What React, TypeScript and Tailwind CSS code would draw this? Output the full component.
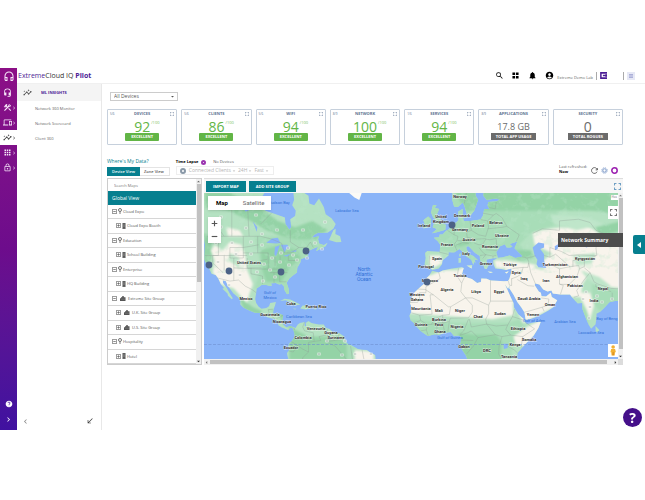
import type { ReactNode } from 'react';
import {
  MdAccountCircle,
  MdApps,
  MdArrowDropDown,
  MdCallReceived,
  MdChevronLeft,
  MdChevronRight,
  MdConstruction,
  MdHeadsetMic,
  MdHelp,
  MdInsights,
  MdNotifications,
  MdOutlineDevices,
  MdOutlineHeadset,
  MdOutlineLock,
  MdSearch,
} from 'react-icons/md';

type Point = [number, number];

const scores = [
  { title: 'DEVICES', ratio: '5/6', value: '92' },
  { title: 'CLIENTS', ratio: '5/6', value: '86' },
  { title: 'WIFI', ratio: '5/6', value: '94' },
  { title: 'NETWORK', ratio: '8/9', value: '100' },
  { title: 'SERVICES', ratio: '1/6', value: '94' },
  { title: 'APPLICATIONS', ratio: '8/9', value: '17.8 GB', total: 'TOTAL APP USAGE' },
  { title: 'SECURITY', ratio: '', value: '0', total: 'TOTAL ROGUES' },
];

const sites = [
  { name: 'Cloud Expo', kind: 'pin' },
  { name: 'Cloud Expo Booth', kind: 'building' },
  { name: 'Education', kind: 'pin' },
  { name: 'School Building', kind: 'building' },
  { name: 'Enterprise', kind: 'pin' },
  { name: 'HQ Building', kind: 'building' },
  { name: 'Extreme Site Group', kind: 'group' },
  { name: 'U.K. Site Group', kind: 'subgroup' },
  { name: 'U.S. Site Group', kind: 'subgroup' },
  { name: 'Hospitality', kind: 'pin' },
  { name: 'Hotel', kind: 'building' },
];

// Coast lines as "lon,lat" pairs
const land = [
  '-135,66 -128,51 -124.5,48.4 -124,46 -124.2,43 -124.3,40.3 -122.5,37.5 -121.8,36.6 -120.6,34.5 -118.5,34 -117.2,32.7 -116.6,31.5 -115.8,30 -114.1,28.2 -115,27.8 -113.5,26.7 -112.2,25.5 -112,24.5 -110,22.9 -109.5,23.4 -111,25.5 -112.5,28 -114.6,30.5 -114.7,31.7 -113.1,31.2 -112,29 -110.5,27.2 -109.3,25.7 -107,23.9 -105.5,22.3 -105.6,20.4 -104,18.9 -101.5,17.6 -98,16.2 -95.2,16.1 -93.5,15.5 -91.5,14 -89,13.3 -87.5,13 -86,11.4 -85.7,9.9 -83.7,8.6 -82.5,8.2 -80.5,7.3 -80,8.2 -78.5,8.7 -77.8,7.3 -77.3,5.5 -77.2,3.9 -78.8,1.5 -80,0.5 -80.8,-1.5 -80,-3 -81.2,-4.5 -81,-6 -79,-12 -35,-12 -34.9,-8 -35.2,-5.5 -37.5,-4.6 -39.5,-3 -42,-2.8 -44.3,-2.5 -47.5,-0.7 -50,0.5 -50.5,2 -51.5,4.2 -54,5.9 -57,6 -59,8 -61,8.6 -62,10.2 -64.5,10.2 -66,10.6 -68.5,11 -70,12.1 -71.5,11 -71.2,9.4 -72,9.6 -71.9,11.5 -74.5,11.1 -75.6,10.3 -76.8,8.5 -79.5,9.5 -81.5,8.9 -83.2,10.2 -83.7,12.5 -83.2,15 -85.5,15.9 -88.5,15.8 -88.2,18 -87.4,20 -87,21.5 -90,21.1 -90.6,19.5 -92,18.6 -94.5,18.2 -96,19.2 -97.3,21 -97.8,23 -97.3,26 -97,28 -94.5,29.5 -92,29.6 -90.5,29.2 -89.2,29.1 -89.5,30.3 -87,30.4 -85.3,29.8 -84,30 -82.8,28.8 -82.5,27.2 -81.2,25.3 -80.2,25.6 -80.4,27.8 -81.4,30.6 -80,32.5 -78,33.9 -76,35 -75.9,37 -74.2,39.3 -74,40.5 -71,41.5 -70,42 -70.8,43 -69,44.1 -67,44.7 -65,45.3 -66,43.7 -64,44.5 -61,45.5 -60,46.7 -62,45.9 -64.5,46.5 -65,48 -64.5,49 -68,48.5 -70,47 -67,49.5 -65,50.2 -60,50.2 -57,51.5 -55.8,53 -58,54.8 -61,56 -62,58 -64.5,60.3 -67,58.5 -69.5,59 -70,61 -74,62.3 -78,62.4 -77.5,60 -78.5,58.5 -76.6,57 -77,55.5 -79.5,54.5 -79,52 -80,51.2 -82,53 -82.3,55 -87,56 -92.5,57 -94.5,59 -94.7,60.5 -91,63 -90,66',
  '5,70 5,62 5,60 6,58.2 8,58 10.5,59.3 11.3,58.5 12.8,55.8 14.2,55.4 16.5,57 18.5,60 17.2,61 17.3,63 21.5,63 21.3,61 23,60 28,60.3 30,60 28,59.5 24,59.4 23.5,58.5 24.4,57.5 21.7,57.4 21,55.5 19.8,54.4 14.5,54 11,54 10.5,55.5 10.5,57.5 8.2,56.8 8.3,54.2 7,53.4 4.7,53 3.5,51.4 1.7,50.8 0,49.6 -1.5,49.6 -1.8,48.7 -4.6,48.5 -2.5,47.3 -1.2,46 -1.5,43.4 -8,43.7 -9.2,43 -8.8,41 -9.4,38.7 -8.9,37 -6.5,36.9 -5.5,36.1 -2,36.8 -0.3,38.5 0,40 3.1,42 3.2,43.2 6,43.1 8.8,44.4 10.4,43.5 12.3,41.7 15,40.3 16,38.2 16.5,39.5 17.1,39 16.8,40.4 18.5,40.1 16,41.8 14,42.5 12.4,44.5 12.4,45.4 13.7,45.5 15,44.5 17,43 19.4,41.8 19.5,40.2 21.2,38.3 21.8,36.8 23,36.5 24,38 23,39.5 23,40.4 26,40.8 28.9,41 28,43.2 30,45.5 32.5,46.2 33.5,45 35.3,45 36.5,45.3 35,46.3 39,47.2 38,45.5 37.5,44.7 41.5,42 41.5,41.5 38,41 35,42 31.5,41.3 29,41.1 26.3,40 26.5,38.4 27.5,36.8 30.5,36.5 33,36.1 36,36.8 35.8,35 34.9,32.5 34.2,31.3 32,31.2 30,31.4 25,31.6 23,32.3 20.2,32.5 20,30.9 18,30.4 15.3,32.2 11,33.3 10.2,34.5 11,36.9 9.8,37.3 5,36.8 0,35.9 -2,35.1 -5.5,35.8 -6.8,34 -9.6,31.5 -9.8,30 -12.5,28 -14.8,26 -16,23.8 -17,21 -16.2,19 -16.4,16.5 -17.4,14.7 -16.7,12.5 -15,11 -13.3,9 -11.5,6.9 -7.7,4.4 -4,5.2 -2,4.8 1.2,6 4.3,6.4 6,4.3 8.5,4.6 9.7,3.8 9.5,1 8.8,-0.7 11,-4 12.3,-6 13.3,-9 13,-12 40.5,-12 39.5,-9 39,-6.5 39.2,-4.6 41.5,-1.8 44,1 47.5,4.5 50,8.5 51.3,11.8 47,11.2 44,10.5 43,11.7 42.5,13 39.5,15.5 37.3,18.8 37,21 35.5,24 33.5,28 32.5,29.9 34.2,27.8 35,29.5 34.8,28.1 37,25 39,21.5 41,19 42.7,16.5 43.3,12.8 45,12.8 48.5,14 52,15.6 55,17.2 57.8,19 59.8,22.4 57,24 56.4,26 54,24.2 51.6,24.3 51.3,26 50.2,26.5 48,29.5 48.5,30.2 50.5,29.8 52.5,27.5 54.8,26.6 56.8,27 57.5,25.6 61.5,25.1 66.5,25.2 67.5,23.8 69,22.3 70.5,20.8 72.8,21 73,18 74.8,13.5 76.3,10 77.5,8.1 79.8,10.3 80.3,13.5 80.3,15.7 82.3,16.7 85,19.3 87,21.4 90,22 95,22 95,70',
  '-59.3,47.7 -57,51 -55.8,51.5 -56,49.8 -53.5,49 -52.8,47 -55.5,46.9',
  '-84.8,22 -82.5,23.1 -79.5,22.8 -75,20.7 -74.3,20.2 -77.5,19.9 -78.5,21.2 -82,22.4',
  '-74.3,18.4 -73,19.9 -70,19.8 -68.5,18.6 -71.5,17.8',
  '-78.3,18.3 -76.3,18.2 -77,17.8',
  '-67.2,18.5 -65.6,18.4 -66,17.9 -67.2,18',
  '-5.5,50 -3.5,50.3 1.4,51.2 1.6,52.8 0,53.2 -1.5,55 -3,56 -1.8,57.5 -4,57.8 -3.2,58.6 -5,58.6 -6,56.5 -4.9,55 -3,54 -4.5,53.2 -5.2,52 -3,51.4',
  '-10,51.6 -6.3,52.2 -6,54.5 -7.5,55.3 -10,54.2 -9.3,53',
  '12.5,38 15.5,38.2 15.1,36.8',
  '8.3,39 9.6,39.2 9.6,41 8.3,41',
  '8.7,41.6 9.4,41.6 9.4,43 8.7,42.5',
  '23.5,35.5 26.3,35.3 25,34.9',
  '32.4,35 34.5,35.6 33.5,34.6',
  '79.8,9.5 81.8,7.5 81,6.1 79.9,6.8',
  '11,55.2 12.5,56 12.3,55 11.2,54.8',
];

const greenland = '-54,66 -52,64.5 -49,61.8 -46,60.6 -43.5,59.9 -42,62 -40,66';

const water = [
  '47,45 50,46.8 53,46.5 53,45 51,44.5 53,42.5 53,40 54,37 50,37.3 49,38.5 49.5,40.3 48,42',
  '58.5,45.5 60.5,46.3 60,44.5 58.7,44',
  '74,45.5 78,46.5 79,46 75,45',
  '31.8,0.3 34,0.3 34,-2 32,-2.5',
  '-92,46.7 -89,48.2 -86,48.5 -84.6,46.6 -87,46.5',
  '-87.8,42.5 -87,41.7 -86.3,43 -85,45.8 -87.5,45.2',
  '-84.5,46 -82.5,43.1 -81.5,44.5 -80,44.7 -81,46',
  '-83.3,41.8 -79,42.8 -81,41.6',
  '-79.6,43.5 -76.3,44.1 -76.5,43.4',
  '-99,53.8 -97,50.5 -96.7,52',
  '-104,58 -101,57 -103,56.8',
];

const biomes = [
  {
    fill: '#a8ddb8',
    shapes: [
      '-12,60 20,61 40,58 60,57 60,53 46,50 40,46 48,41 40,40 26,42 18,38 8,43 -2,44 -12,50',
      '-98,49 -66,49 -60,44 -80,24 -98,28 -95,38',
      '-18,13 -8,12 8,11 22,11 34,11 40,13 43,9 40,3 36,-3 36,-10 8,-10 8,3 -8,3 -18,9',
      '72,21 76,18 76,8 70,10',
      '78,30 92,27 94,21 86,19 82,17 78,22',
      '-50,1 -43,-3 -43,-9 -52,-9',
    ],
  },
  {
    fill: '#94d3a6',
    shapes: [
      '-124,58 -112,57 -100,54 -92,51 -84,49 -76,48 -66,48 -60,51 -68,54 -77,52 -86,54 -98,59 -112,62 -124,62',
      '-95,44 -84,46 -76,44 -74,41 -80,37 -84,31 -92,31 -94,36',
      '-125,50 -121,49 -120,42 -123,38 -126,40',
      '5,63 14,64 40,66 62,64 80,64 92,62 92,56 78,57 60,57 40,57 25,57 12,57',
      '34,44 46,44 48,41 40,40',
      '6,46 15,48 15,46.5 7,45',
      '8,6 16,5 28,5 31,1 30,-10 10,-10 9,0',
      '-80,9 -70,4 -62,4 -54,4 -50,0 -50,-8 -80,-8',
      '82,49 94,51 94,54 80,52',
      '-92,18 -86,16 -83,10 -78,8 -78,10 -84,17',
      '-106,24 -99,19 -94,17 -96,15 -104,18',
    ],
  },
  {
    fill: '#f8f4ec',
    shapes: [
      '-119,46 -115,44 -111,47 -105,46 -103,42 -102,36 -99,30 -101,25 -102,21 -106,25 -109,28 -116,30 -120,35 -119,40 -121,44',
      '-113,52 -106,51 -104,49 -112,49',
      '-18,32 -6,34 0,36 8,36 12,38 36,34 37,15 26,13 12,14 -4,15 -18,16',
      '33,38 44,39 50,38 57,43 48,46 47,50 52,51 62,52 74,53 84,49 95,48 95,28 84,29 76,34 73,30 72,24 62,24 60,20 42,11 32,31',
      '27,40 34,40 42,39 40,36 28,37',
      '-7,42 -1,42 0,39 -5,37 -7,38',
      '37,4 44,9 52,13 52,8 43,-1 38,0',
      '71,26 77,26 79,20 77,13 75,18',
      '-46,-3 -36,-4 -36,-9 -46,-9',
    ],
  },
  {
    fill: '#bfe6ca',
    shapes: [
      '68,42 80,43 78,39 70,38',
      '48,38 54,37 52,36 48,37',
      '56,56 76,55 84,53 70,51 58,53',
      '72,36 82,33 88,29 84,28 76,32',
      '-111,43 -106,41 -106,36 -108,38 -112,40',
    ],
  },
];

const borders = [
  '-123,49 -95,49 -89,48 -84,46.5 -82.5,43 -79,43 -75,45 -71,45 -69,47 -67.5,45',
  '-117,32.6 -111,31.3 -106.5,31.8 -103,29 -99.5,27.5 -97.3,26',
  '-120,60 -94,60',
  '-120,54 -114,49',
  '-110,60 -110,49',
  '-102,60 -101,49',
  '-95,53 -89,56.5',
  '-79.5,51 -79.5,47 -75,45',
  '-117,49 -117,42 -120,42 -120,39 -114.6,35',
  '-124,42 -102,42',
  '-114,42 -114,36',
  '-111,45 -104,45 -104,41 -111,41 -111,45',
  '-109,41 -109,31.5',
  '-104,49 -104,45 -96,46',
  '-102,41 -102,37 -94.5,37',
  '-109,37 -94.5,36.5 -82,36.5',
  '-100,37 -100,34.5 -94,33.5 -94,30',
  '-96.5,49 -96.5,43 -91,43 -91,36',
  '-104,43 -96.5,43',
  '-95,40 -91.5,40.5',
  '-90,35 -85,35 -81,35',
  '-88,35 -88,30.5',
  '-85,35 -85,31 -81.5,31',
  '-87.5,41.5 -87.5,38',
  '-84.8,41.7 -84.8,39',
  '-80.5,42 -80.5,40 -75,40',
  '-92,14.5 -90.5,16 -91,17.8 -88.5,18',
  '-89,15.9 -89,14.3 -87.5,13.2',
  '-83.3,15 -87,13',
  '-83.7,11 -85.7,11.1',
  '-77.5,8.5 -77.3,7.5',
  '-72,11.5 -73,9 -72,7 -67.5,6 -67,1.5 -70,1 -70,-4 -73,-2.5 -77.5,0.5 -79,1.4',
  '-67,1.5 -63.5,2 -64.5,4 -61,4.8 -60,8',
  '-60,5 -59.8,1.5 -56.5,2 -57.5,5.8',
  '-56.5,2 -54.5,2.3 -54,5.8',
  '-54.5,2.3 -52,2.5 -51.5,4.2',
  '-75.3,-0.1 -78,-4 -80.3,-3.5',
  '-70,-4 -73,-7 -73,-10',
  '-60,1 -56,-1 -50,-8',
  '-48,-1 -47,-8',
  '-42,-3 -41,-8',
  '-6.9,41.9 -7,38 -7.4,37.2',
  '-1.8,43.3 3.1,42.4',
  '2.5,51 6,49.5 8,49 7.5,47.5 6,46.2 7.5,43.8',
  '7,53.3 6,51 6,49.5',
  '8,47.5 13,47.5 12.5,50.3 15,51 14.3,54',
  '7,45.9 10.5,46.8 13.7,46.5',
  '15,51 18.8,49.5 22.5,49 24,52 23.5,54 19.8,54.4',
  '13,48.6 17,48 22.5,48.2',
  '16.5,46.6 19,46 21,46.2 22.5,48 24.8,47.8 28,48.2 28.2,45.5 29.6,45.3',
  '23.5,51.5 31.5,52 33.5,52.3 40,49.5 38.5,47.2',
  '23.5,54 26.5,55.7 28,56.2 31,55 33.5,52.3',
  '21,56.3 26.5,55.7',
  '24.4,57.9 27.5,57.5 28,59.4',
  '22.7,44.2 28.5,43.8',
  '19.5,42 22.5,42.3 26.3,41.8 28,42',
  '19,45 20.5,43.5 22.5,42.3 21,40.8',
  '26.3,41.8 26.3,40.8',
  '11.3,59 12.5,62',
  '41.5,41.5 44,41 45,39.5 44.5,37.2 42,37.2 36.5,36.8',
  '44,41 47,41.5 48.5,41.9',
  '47,50 52,51.5 61,51 61,54 71,54.5 77,53.5 80,51 87,49.2',
  '87,49.2 83,47 80,45 80.5,42 74,40 74,37.5 71.5,36.7',
  '54,37.4 57,38.2 61,36.6 61,30 63,29.3 61.5,25.2',
  '61,36.6 66.5,37.5 71,38 71.5,36.7 70,33 66,29.8 61,29.8',
  '53,42 56,41.3 59,42.5 66.5,37.5',
  '56,45 56,41.3',
  '56,45 62,43.5 66,42 71,42.2 80,42',
  '71,42 73,40 68,40 68,37.5',
  '74,37 77,35 74,32 70,27 71,24.5 68.5,23.8',
  '77,35 79,31 81,30 88,28 92,27.8',
  '80,30 80,28.7 88,26.5',
  '88.5,26 88.5,23 89,22',
  '45,39 46,35 48,31 48.5,30',
  '42,37.2 41,34.4 39,33.3 36,32.3',
  '39,32 44.5,29.2 47.8,29',
  '36,32.5 36,29.3 35,29.4',
  '34.3,31.3 34.9,29.5',
  '42.7,16.5 46,17.3 52,19 53,17',
  '52,19 55,20 55.5,23 51.5,23.5',
  '25,31.6 25,22 36.8,22',
  '25,22 24,20 15.5,23.5 12,23.5 9.5,26.5 10,30.5 11.5,33.2',
  '8.3,36.8 7.6,33.5 9.8,30.5',
  '-2,35 -1.2,32.5 -8.7,28.7 -8.7,27.5 -13,27.7',
  '-8.7,27.5 -8.7,26 -12,26 -12,23.4 -13,21.4 -17,21.3',
  '-8.7,27.3 -4.8,25 3,19.2 4.2,19.2 12,23.5',
  '-4.8,25 -6.5,25 -5.5,15.5 -12,15 -16.3,16.2',
  '4.2,19.2 3.5,15.3 0,15 -4,13 -6,10.3',
  '12,23.5 15.5,20 15.5,16.5 13.5,13.7 4,13.5 3.5,11.8 0,11 0,15',
  '24,20 24,15.7 22.5,13 23,10.5 15,9 14,13',
  '23,10.5 28,9.5 34,10 36.5,14.3 37.5,18',
  '34,10 33,7.8 35.5,4.8 41.8,4 48,8 43,11.5',
  '23,10.5 27.5,5 31,4 35.5,4.8',
  '36.5,14.3 42.4,12.5',
  '41.8,4 41,-1.6',
  '34,-1 37.5,-3 39.2,-4.6',
  '31,4 29.5,-1 29.3,-5 31,-8.5',
  '27.5,5 18.5,3.5 15,7 13,6 9,4.7',
  '18.5,3.5 16,-1 12.5,-5',
  '16,2 11,2.2 9.7,2.2',
  '13.5,13 11,7 9,5',
  '2.7,6.4 3.5,11.8',
  '1.2,6 0,11 -3,11 -3,5',
  '-7.5,4.5 -8.5,7.5 -8,10.2 -6,10.3 -3,11',
  '-8.5,7.5 -11.5,7',
  '-15,11 -11.5,12.4 -12,15',
  '-8,10.2 -11.5,12.4',
];

// State and province tags
const tags = [
  '221 217', '221 227', '256 215', '277 230', '303 230', '325 222', '216 243', '232 243', '251 242', '236 254', '218 262', '240 275',
  '251 254', '262 245', '272 258', '257 272', '270 270', '281 253', '288 248', '297 260', '289 265', '262 234', '315 243', '322 249',
  '280 262', '264 264', '293 255', '307 258', '275 277', '246 228', '263 281', '229 285', '319 354', '342 355', '355 354', '371 354',
  '586 292', '590 307', '597 296', '589 318', '612 299', '583 299', '327 341', '345 341', '602 302', '241 262',
];

const countries: [string, number, number][] = [
  ['United States', 249, 264],
  ['Mexico', 246, 300],
  ['Cuba', 291, 305],
  ['Puerto Rico', 316, 308],
  ['Guatemala', 270, 316],
  ['Nicaragua', 282, 323],
  ['Venezuela', 316, 330],
  ['Guyana', 331, 334],
  ['Suriname', 336, 339],
  ['Colombia', 303, 339],
  ['Ecuador', 291, 349],
  ['Norway', 460, 198],
  ['Denmark', 462, 217],
  ['United', 441, 218],
  ['Kingdom', 441, 223],
  ['Ireland', 424, 227],
  ['Germany', 460, 231],
  ['Poland', 478, 227],
  ['Belarus', 496, 224],
  ['Ukraine', 502, 237],
  ['Austria', 469, 241],
  ['France', 447, 246],
  ['Romania', 490, 248],
  ['Italy', 466, 255],
  ['Spain', 437, 260],
  ['Greece', 486, 265],
  ['Portugal', 426, 268],
  ['Türkiye', 510, 266],
  ['Turkmenistan', 555, 266],
  ['Kyrgyzstan', 585, 260],
  ['Tunisia', 460, 277],
  ['Syria', 516, 274],
  ['Iraq', 524, 280],
  ['Iran', 546, 282],
  ['Afghanistan', 567, 278],
  ['Pakistan', 575, 287],
  ['Nepal', 603, 290],
  ['India', 594, 302],
  ['Morocco', 430, 282],
  ['Algeria', 447, 291],
  ['Libya', 476, 293],
  ['Egypt', 499, 293],
  ['Saudi Arabia', 529, 300],
  ['Oman', 550, 306],
  ['Yemen', 533, 316],
  ['Western', 417, 296],
  ['Sahara', 417, 301],
  ['Mauritania', 421, 310],
  ['Mali', 439, 312],
  ['Niger', 460, 312],
  ['Chad', 478, 318],
  ['Sudan', 500, 315],
  ['Burkina', 439, 321],
  ['Faso', 439, 326],
  ['Guinea', 421, 326],
  ['Ghana', 440, 333],
  ['Nigeria', 457, 328],
  ['Ethiopia', 518, 330],
  ['Somalia', 529, 341],
  ['Kenya', 515, 346],
  ['Tanzania', 509, 358],
  ['Gabon', 464, 348],
  ['DRC', 487, 352],
];

const seas: [string, number, number][] = [
  ['Hudson Bay', 279, 204],
  ['Labrador Sea', 347, 212],
  ['Gulf of', 270, 294],
  ['Mexico', 270, 299],
  ['Caribbean Sea', 299, 318],
  ['Gulf of Guinea', 450, 339],
  ['Gulf of Aden', 534, 322],
  ['Arabian Sea', 565, 323],
  ['Laccadive Sea', 591, 334],
  ['Bay of Beng', 607, 320],
];

const markers: Point[] = [
  [209, 265],
  [229, 271],
  [281, 272],
  [306, 251],
  [452, 225],
  [427, 282],
];

const project = (pair: string) => {
  const [lon, lat] = pair.split(',').map(Number);
  const y = Math.log(Math.tan(Math.PI / 4 + (lat * Math.PI) / 360));
  return `${(442.6 + lon * 1.916).toFixed(1)} ${(344.3 - y * 109.8).toFixed(1)}`;
};

const toPath = (line: string) => 'M' + line.split(' ').map(project).join('L');

const landPath = land.map((l) => toPath(l) + 'Z').join('');

const WorldMap = () => {
  return (
    <svg
      className="block h-[166px] w-full bg-[#8ab4f8] font-['Roboto',sans-serif]"
      viewBox="204 193 414 166"
      preserveAspectRatio="xMidYMid slice"
      role="img"
      aria-label="Map"
    >
      <defs>
        <clipPath id="land">
          <path d={landPath} />
        </clipPath>
        <filter id="soft">
          <feGaussianBlur stdDeviation="1.2" />
        </filter>
        <filter id="grain" x="0" y="0" width="1" height="1">
          <feTurbulence type="fractalNoise" baseFrequency="0.13" numOctaves="3" seed="4" />
          <feColorMatrix values="0 0 0 0 0.5  0 0 0 0 0.79  0 0 0 0 0.6  0 5 0 0 -2.6" />
        </filter>
      </defs>
      <path d={landPath} fill="#b5e2c2" />
      <g clipPath="url(#land)">
        {biomes.map((b) => (
          <path key={b.fill} d={b.shapes.map((s) => toPath(s) + 'Z').join('')} fill={b.fill} filter="url(#soft)" />
        ))}
        <rect x="204" y="193" width="414" height="80" filter="url(#grain)" opacity="0.3" />
      </g>
      <path d={toPath(greenland) + 'Z'} fill="#fbfaf6" />
      <path d={water.map((w) => toPath(w) + 'Z').join('')} fill="#8ab4f8" />
      <path d={borders.map(toPath).join('')} fill="none" stroke="#8d9a94" strokeWidth="0.5" strokeOpacity="0.65" />
      <path d="M204 344.5H618" stroke="#6d8fd0" strokeWidth="0.6" strokeDasharray="3 1.5" />
      {tags.map((t) => {
        const [x, y] = t.split(' ').map(Number);
        return (
          <g key={t}>
            <rect x={x - 2} y={y - 1.5} width="4" height="3" rx="1" fill="#fff" fillOpacity="0.55" />
            <path d={`M${x - 1.3} ${y}h2.6`} stroke="#87948e" strokeWidth="1" strokeOpacity="0.6" />
          </g>
        );
      })}
      <g fontSize="4" fill="#2f6fd6" textAnchor="middle">
        {seas.map(([name, x, y]) => (
          <text key={name} x={x} y={y}>
            {name}
          </text>
        ))}
        <g fontSize="5">
          <text x="364" y="271">
            North
          </text>
          <text x="364" y="276">
            Atlantic
          </text>
          <text x="364" y="281">
            Ocean
          </text>
        </g>
      </g>
      <g fontSize="4" fontWeight="700" fill="#2c2c2c" stroke="#fff" strokeWidth="0.8" strokeOpacity="0.7" paintOrder="stroke" textAnchor="middle">
        {countries.map(([name, x, y]) => (
          <text key={name} x={x} y={y}>
            {name}
          </text>
        ))}
      </g>
      {markers.map(([x, y]) => (
        <circle key={x} cx={x} cy={y} r="3.4" fill="#4c6285" />
      ))}
    </svg>
  );
};

const Corners = ({ className }: { className: string }) => (
  <svg viewBox="0 0 8 8" className={className} fill="none" stroke="currentColor" strokeWidth="1.2">
    <path d="M.6 2.8V.6h2.2M5.2.6h2.2v2.2M7.4 5.2v2.2H5.2M2.8 7.4H.6V5.2" />
  </svg>
);

const RailItem = ({ label, icon, active }: { label: string; icon: ReactNode; active?: boolean }) => (
  <a
    href="#"
    aria-label={label}
    className={`flex h-[15px] items-center pl-[3px] ${active ? 'bg-white text-[#333]' : 'text-[#f6e8f9]'}`}
  >
    {icon}
    <MdChevronRight className="-ml-px size-[6px] shrink-0" />
  </a>
);

const ScoreCard = ({ title, ratio, value, total }: (typeof scores)[number]) => (
  <section className="flex flex-col items-center rounded-[1px] border border-[#c6d0dc] bg-white pb-[3px]">
    <div className="grid h-2 w-full grid-cols-[8px_1fr_8px] items-center px-[2px] text-[#5d7290]">
      <span className="text-[3px]">{ratio}</span>
      <h2 className="text-center text-[4px] leading-[8px] font-bold">{title}</h2>
      <button aria-label={`Expand ${title}`} className="flex justify-end">
        <Corners className="size-1" />
      </button>
    </div>
    {total ? (
      <>
        <p className={`mt-[2px] h-[13px] leading-[13px] text-[#6b6b6b] ${value === '0' ? 'text-[14px]' : 'text-[9px]'}`}>
          {value}
        </p>
        <p className="h-[7px] bg-[#6b6b6b] px-[5px] text-[4px] leading-[7px] font-bold text-white">{total}</p>
      </>
    ) : (
      <>
        <p className="relative mt-[2px] h-[13px] text-[14px] leading-[13px] text-[#62b546]">
          {value}
          <span className="absolute top-0 left-full pl-px text-[4px] leading-[5px] text-[#7cc162]">/100</span>
        </p>
        <p className="h-2 rounded-[1px] bg-[#62b546] px-[6px] text-[4px] leading-[8px] font-bold text-white">EXCELLENT</p>
      </>
    )}
  </section>
);

const SiteIcon = ({ kind }: { kind: string }) => {
  if (kind === 'pin') {
    return (
      <svg viewBox="0 0 8 12" className="mb-px h-[6px] w-[4px]" fill="none" stroke="#555" strokeWidth="1.6">
        <circle cx="4" cy="4" r="3" />
        <path d="M4 7v5" />
      </svg>
    );
  }
  if (kind === 'building') {
    return (
      <svg viewBox="0 0 6 10" className="h-[6px] w-[4px]" fill="#555">
        <path d="M.5 0h5v10h-5z" />
        <path d="M2 2h.8M3.6 2h.8M2 4h.8M3.6 4h.8M2 6h.8M3.6 6h.8M2.5 9h1" stroke="#ddd" strokeWidth="0.9" />
      </svg>
    );
  }
  return (
    <svg viewBox="0 0 12 10" className="h-[5px] w-[6px]" fill="#555">
      <path d="M0 10V4.5h2V2.5h2.5V0h3v2.5H11V10z" />
      <path d="M2 6.3h8" stroke="#bbb" strokeWidth="0.6" />
    </svg>
  );
};

const SiteRow = ({ name, kind }: { name: string; kind: string }) => {
  const nested = kind === 'building' || kind === 'subgroup';
  return (
    <li
      className={`flex flex-1 items-center gap-[1px] border-b border-[#d6d6d6] text-[4px] leading-[5px] text-[#555] ${nested ? 'pl-2' : 'pl-1'}`}
    >
      <button aria-label={nested ? `Expand ${name}` : `Collapse ${name}`}>
        <svg viewBox="0 0 10 10" className="size-[5px]" fill="none" stroke="#666" strokeWidth="1.5">
          <path d={nested ? 'M.7.7h8.6v8.6H.7zM2.5 5h5M5 2.5v5' : 'M.7.7h8.6v8.6H.7zM2.5 5h5'} />
        </svg>
      </button>
      <span className={kind === 'group' || kind === 'subgroup' ? 'pr-px pl-[2px]' : ''}>
        <SiteIcon kind={kind} />
      </span>
      {name}
    </li>
  );
};

const Rail = () => (
  <aside className="flex w-[17px] shrink-0 flex-col justify-between bg-linear-to-b from-[#8c0f86] via-[#6d0c8c] via-50% to-[#4011a0]">
    <nav aria-label="Main">
      <a href="#" aria-label="Home" className="flex h-[17px] items-center justify-center text-[#f6e8f9]">
        <MdOutlineHeadset className="size-3" />
      </a>
      <a href="#" aria-label="Support" className="flex h-[15px] items-center pl-[3px] text-[#f6e8f9]">
        <MdHeadsetMic className="size-[9px]" />
      </a>
      <RailItem label="Configure" icon={<MdConstruction className="size-[9px] shrink-0" />} />
      <RailItem label="Devices" icon={<MdOutlineDevices className="size-[9px] shrink-0" />} />
      <RailItem label="Insights" icon={<MdInsights className="size-[9px] shrink-0" />} active />
      <RailItem label="Apps" icon={<MdApps className="size-[9px] shrink-0" />} />
      <RailItem label="Security" icon={<MdOutlineLock className="size-[9px] shrink-0" />} />
    </nav>
    <div className="flex flex-col items-center gap-[7px] pb-[6px] text-white">
      <MdHelp className="size-2" />
      <MdChevronRight className="size-[9px]" />
    </div>
  </aside>
);

const Header = () => (
  <header className="flex h-4 items-center justify-between border-b border-[#f0f0f0] pr-[10px] pl-px">
    <p className="text-[7px] leading-[10px] text-[#333]">
      <span className="text-[#4c1d95]">Extreme</span>Cloud IQ <b className="text-[#4c1d95]">Pilot</b>
    </p>
    <div className="flex items-center text-black">
      <MdSearch className="mr-2 size-[9px]" />
      <svg viewBox="0 0 8 8" className="mr-[9px] size-[7px]">
        <path d="M.5.5h3v3h-3zM4.5.5h3v3h-3zM.5 4.5h3v3h-3zM4.5 4.5h3v3h-3z" />
      </svg>
      <MdNotifications className="mr-2 size-[9px]" />
      <MdAccountCircle className="mr-[3px] size-[9px]" />
      <span className="pt-1 text-[4px] leading-[5px] text-[#666]">Extreme Demo Lab</span>
      <span className="mx-[3px] h-2 w-px bg-[#aaa]" />
      <svg viewBox="0 0 12 12" className="mr-4 size-[7px]" fill="none" stroke="#4c1d95" strokeWidth="2.6">
        <path d="M12 1.5H1.5v9H12M5 6h7" />
        <path d="M10.5 4v4" strokeWidth="3" />
      </svg>
      <span className="mr-[3px] h-2 w-px bg-[#aaa]" />
      <span className="flex size-2 items-center justify-center bg-[#e6e8f5]">
        <svg viewBox="0 0 8 8" className="size-1" stroke="#8a8fc8" strokeWidth="1.4">
          <path d="M0 1.2h8M0 4h8M0 6.8h8" />
        </svg>
      </span>
    </div>
  </header>
);

const SubNav = () => (
  <nav aria-label="Insights" className="flex w-[85px] shrink-0 flex-col border-r border-[#e8e8e8]">
    <h1 className="flex h-[17px] items-center gap-[9px] bg-[#f4f4f4] pl-[6px] text-[4px] font-bold text-[#4c1d95]">
      <MdInsights className="size-[9px] text-[#444]" />
      ML INSIGHTS
    </h1>
    <ul className="text-[4px] leading-[15px] text-[#666]">
      {['Network 360 Monitor', 'Network Scorecard', 'Client 360'].map((item) => (
        <li key={item} className="pl-[18px]">
          <a href="#">{item}</a>
        </li>
      ))}
    </ul>
    <div className="mt-auto flex justify-between pr-[7px] pb-1 pl-1">
      <MdChevronLeft className="size-[9px] text-[#888]" />
      <MdCallReceived className="size-2 text-[#333]" />
    </div>
  </nav>
);

const DataToolbar = () => (
  <div className="mt-[13px] flex h-5 justify-between">
    <div className="flex gap-[6px]">
      <div>
        <h2 className="text-[5px] leading-[6px] text-[#0b7f8f]">Where's My Data?</h2>
        <div className="mt-[3px] flex h-[9px] border border-[#e4e4e4] text-[4px] leading-[7px] font-semibold">
          <button className="-m-px bg-[#067f8f] px-[5px] text-white">Device View</button>
          <button className="px-[5px] text-[#555]">Zone View</button>
        </div>
      </div>
      <div>
        <div className="flex h-[7px] items-center pt-px text-[4px] leading-[6px]">
          <b className="text-black">Time Lapse</b>
          <span className="mx-[3px] size-[5px] rounded-full border-2 border-[#9b35b0]" />
          <span className="pl-1 text-[#555]">No Devices</span>
        </div>
        <div className="mt-px flex h-[9px] items-center border border-[#eee] px-[3px] text-[5px] leading-[7px] text-[#b5b5b5]">
          <span className="mr-[3px] size-[6px] rounded-full border-2 border-[#8a99a8]" />
          Connected Clients
          <MdArrowDropDown className="mr-px size-[6px]" />
          24H
          <MdArrowDropDown className="mr-px size-[6px]" />
          Fast
          <MdArrowDropDown className="size-[6px]" />
        </div>
      </div>
    </div>
    <div className="flex items-center pt-px pr-[5px]">
      <p className="mr-1 text-[4px] leading-[5px] text-[#555]">
        Last refreshed:
        <b className="block text-black">Now</b>
      </p>
      <button aria-label="Refresh" className="mr-[3px] pt-1">
        <svg viewBox="0 0 12 12" className="size-[7px]" fill="none" stroke="#555" strokeWidth="1.4">
          <path d="M10.8 5A5 5 0 1 0 10.5 8M11 1.8V5H8" />
        </svg>
      </button>
      <button aria-label="Settings" className="mr-[3px] pt-1">
        <svg viewBox="0 0 12 12" className="size-[7px]" fill="none" stroke="#8fa8d0">
          <circle cx="6" cy="6" r="3" strokeWidth="2" />
          <circle cx="6" cy="6" r="4.8" strokeWidth="1.6" strokeDasharray="2 1.77" />
        </svg>
      </button>
      <button aria-label="Help" className="pt-1">
        <svg viewBox="0 0 12 12" className="size-[7px]" fill="none" stroke="#9b1fb0" strokeWidth="2.6">
          <circle cx="6" cy="6" r="4.6" />
        </svg>
      </button>
    </div>
  </div>
);

const SiteTree = () => (
  <div className="flex w-[95px] shrink-0 border border-[#ccc]">
    <div className="flex flex-1 flex-col">
      <input
        aria-label="Search Maps"
        placeholder="Search Maps"
        className="h-3 w-full shrink-0 pl-[6px] text-[4px] leading-[11px] placeholder:text-[#777]"
      />
      <ul className="flex flex-1 flex-col">
        <li className="flex flex-1 items-center bg-[#067f8f] pl-1 text-[5px] leading-[6px] text-white">Global View</li>
        {sites.map((site) => (
          <SiteRow key={site.name} {...site} />
        ))}
      </ul>
    </div>
    <div className="flex w-[5px] flex-col items-center justify-between bg-[#f0f0f0] py-px">
      <svg viewBox="0 0 4 4" className="size-[3px]" fill="#666">
        <path d="M0 3l2-2 2 2z" />
      </svg>
      <span className="mt-px mb-auto h-[98px] w-[4px] bg-[#c1c1c1]" />
      <svg viewBox="0 0 4 4" className="size-[3px]" fill="#333">
        <path d="M0 1l2 2 2-2z" />
      </svg>
    </div>
  </div>
);

const MapPanel = () => (
  <div className="relative ml-[2px] min-w-0 flex-1">
    <div className="flex h-[15px] items-center gap-[3px] border-t border-[#ddd] bg-[#f6f6f6] px-[2px] text-[4px] leading-[11px] font-bold text-white">
      <button className="h-[11px] bg-[#067f8f] px-[7px]">IMPORT MAP</button>
      <button className="h-[11px] bg-[#067f8f] px-[7px]">ADD SITE GROUP</button>
      <button aria-label="Full screen" className="ml-auto text-[#6f9fc4]">
        <Corners className="size-[7px]" />
      </button>
    </div>
    <div className="flex">
      <div className="relative min-w-0 flex-1 overflow-hidden">
        <WorldMap />
        <div className="absolute top-[3px] left-1 flex h-[14px] bg-white font-['Roboto',sans-serif] text-[6px] leading-[14px] shadow-sm">
          <button className="px-2 font-bold text-black">Map</button>
          <button className="px-[7px] text-[#666]">Satellite</button>
        </div>
        <div className="absolute top-6 left-1 flex w-[13px] flex-col bg-white shadow-sm">
          {['Zoom in', 'Zoom out'].map((label, i) => (
            <button key={label} aria-label={label} className="flex h-[13px] items-center justify-center">
              <svg viewBox="0 0 8 8" className="size-[7px]" stroke="#555" strokeWidth="1.3">
                <path d={i === 0 ? 'M.8 4h6.4M4 .8v6.4' : 'M.8 4h6.4'} />
              </svg>
            </button>
          ))}
        </div>
        <span className="absolute top-[2px] right-0 bg-white px-px text-[3px] leading-[5px] text-[#666]">Hos</span>
        <button
          aria-label="Toggle fullscreen view"
          className="absolute top-[13px] right-0 flex h-[13px] w-[10px] items-center justify-center bg-white text-[#777]"
        >
          <Corners className="size-[7px]" />
        </button>
        <span className="absolute right-0 bottom-[2px] flex h-[13px] w-[10px] items-center justify-center bg-white">
          <svg viewBox="0 0 8 14" className="h-[11px]" fill="#f2b134">
            <circle cx="4" cy="2.5" r="2.3" />
            <path d="M1.5 5.2h5l1 4H6.4L6 13.5H2L1.6 9.2H.5z" />
            <path d="M3 13l.4-4h1.2l.4 4" fill="#d98b1f" />
          </svg>
        </span>
      </div>
      <div className="flex w-[5px] flex-col items-center justify-between bg-[#f1f1f1] py-px">
        <svg viewBox="0 0 4 4" className="size-[3px]" fill="#777">
          <path d="M0 3l2-2 2 2z" />
        </svg>
        <span className="mt-px mb-[6px] w-[4px] flex-1 bg-[#c1c1c1]" />
        <svg viewBox="0 0 4 4" className="size-[3px]" fill="#333">
          <path d="M0 1l2 2 2-2z" />
        </svg>
      </div>
    </div>
    <div className="flex h-[6px] items-center bg-[#dcdcdc] pr-[5px]">
      <div className="flex h-full flex-1 items-center bg-[#f1f1f1] px-px">
        <svg viewBox="0 0 4 4" className="size-[3px]" fill="#777">
          <path d="M3 0L1 2l2 2z" />
        </svg>
        <span className="mr-[7px] ml-[2px] h-[4px] flex-1 bg-[#c1c1c1]" />
        <svg viewBox="0 0 4 4" className="size-[3px]" fill="#333">
          <path d="M1 0l2 2-2 2z" />
        </svg>
      </div>
    </div>
    <div className="absolute top-[55px] right-0 h-[14px] w-[65px] bg-[#4d4d4d] pl-[3px] text-[5px] leading-[14px] font-bold text-white">
      Network Summary
    </div>
    <button
      aria-label="Open summary"
      className="absolute top-[57px] -right-[22px] flex h-[19px] w-3 items-center justify-center rounded-l-[2px] bg-[#067f8f]"
    >
      <svg viewBox="0 0 4 6" className="h-[6px] w-1" fill="#fff">
        <path d="M4 0v6L0 3z" />
      </svg>
    </button>
  </div>
);

const App = () => {
  return (
    <div className="flex min-h-screen bg-white pt-[68px] pb-[70px] font-['Open_Sans',sans-serif]">
      <Rail />
      <div className="flex min-w-0 flex-1 flex-col">
        <Header />
        <div className="flex flex-1">
          <SubNav />
          <main className="min-w-0 flex-1 pt-2 pr-[22px] pl-[5px]">
            <div className="relative ml-[3px] w-[68px]">
              <select
                aria-label="Devices"
                className="block h-[9px] w-full appearance-none border border-[#ccc] bg-white pl-[3px] text-[5px] leading-[7px] text-[#555]"
              >
                <option>All Devices</option>
              </select>
              <MdArrowDropDown className="pointer-events-none absolute top-px right-[2px] size-[7px] text-[#555]" />
            </div>
            <div className="mt-2 grid grid-cols-7 gap-1">
              {scores.map((score) => (
                <ScoreCard key={score.title} {...score} />
              ))}
            </div>
            <DataToolbar />
            <div className="flex">
              <SiteTree />
              <MapPanel />
            </div>
          </main>
        </div>
      </div>
      <button
        aria-label="Help"
        className="fixed right-[3px] bottom-[73px] size-[19px] rounded-full bg-[#45108a] text-[14px] leading-[19px] font-bold text-white"
      >
        ?
      </button>
    </div>
  );
};

export default App;
